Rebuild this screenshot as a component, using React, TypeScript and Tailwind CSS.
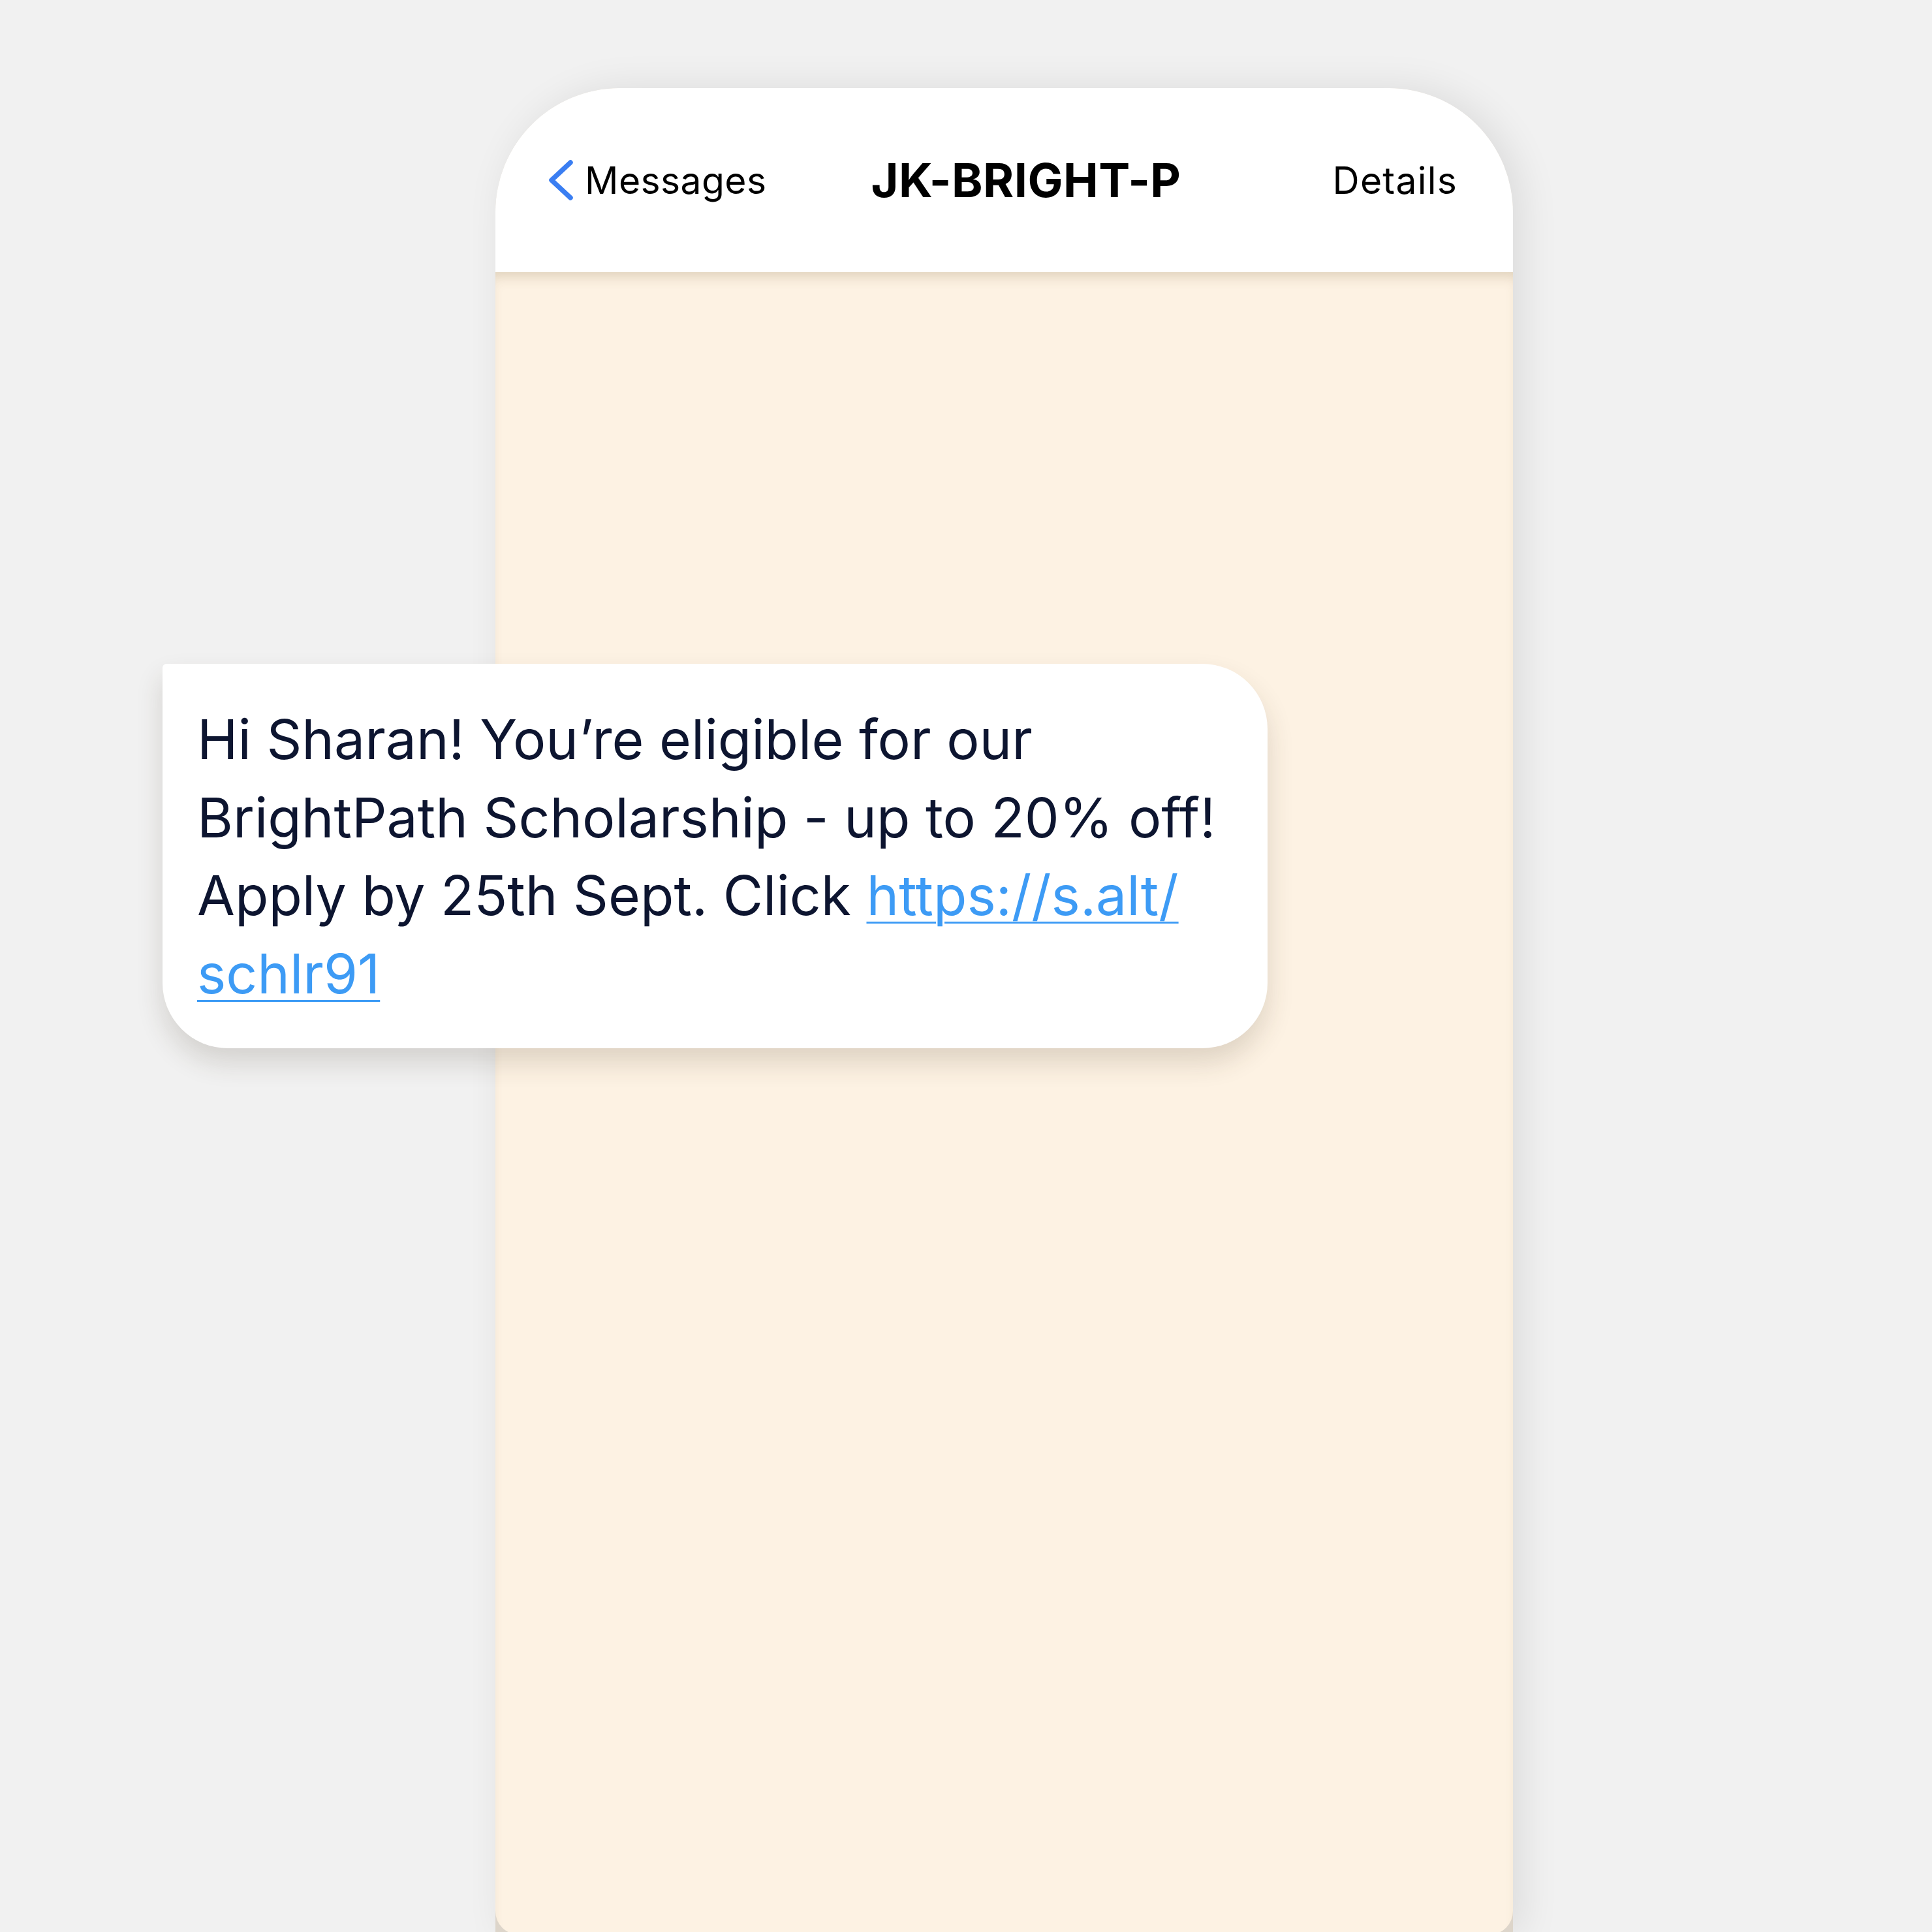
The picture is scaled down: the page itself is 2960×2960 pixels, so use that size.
const font = { fontFamily: "Inter, 'Noto Sans', sans-serif" };

function BackChevron() {
  return (
    <svg width="44" height="70" viewBox="0 0 44 70" fill="none" className="shrink-0">
      <polyline
        points="34,8 5,35 34,62"
        stroke="#3a7ef2"
        strokeWidth="7.5"
        strokeLinecap="round"
        strokeLinejoin="round"
      />
    </svg>
  );
}

function Header() {
  return (
    <div className="flex h-[282px] items-center bg-white pl-[81px] pr-[85px] text-black">
      <div className="flex items-center gap-[12px]">
        <BackChevron />
        <span className="text-[57px] leading-none tracking-[0.4px]">Messages</span>
      </div>
      <span className="ml-[160px] text-[72px] font-bold leading-none tracking-[0.5px]">JK-BRIGHT-P</span>
      <span className="ml-auto text-[57px] leading-none tracking-[1.2px]">Details</span>
    </div>
  );
}

function MessageBubble() {
  return (
    <div className="absolute left-[249px] top-[1017px] w-[1693px] rounded-[100px] rounded-tl-[6px] bg-white pb-[55px] pl-[53px] pr-[40px] pt-[56px] shadow-[0_22px_40px_rgba(60,50,30,0.16)]">
      <p className="whitespace-nowrap text-[84px] leading-[119.5px] text-[#0d1530]">
        Hi Sharan! You’re eligible for our
        <br />
        BrightPath Scholarship - up to 20% off!
        <br />
        Apply by 25th Sept. Click{" "}
        <a className="text-[#3d9bf5] underline decoration-[3px] underline-offset-[10px]">
          https://s.alt/
          <br />
          schlr91
        </a>
      </p>
    </div>
  );
}

export default function App() {
  return (
    <div className="relative h-[2960px] overflow-hidden bg-[#f1f1f1]" style={font}>
      <div className="ml-[759px] mt-[135px] w-[1559px] overflow-hidden rounded-t-[190px] bg-[#ddd5ca] shadow-[14px_0_60px_rgba(0,0,0,0.09)]">
        <Header />
        <div className="h-[2547px] rounded-b-[36px] bg-[#fdf2e3] shadow-[inset_0_16px_20px_-10px_rgba(120,95,50,0.24)]" />
      </div>
      <MessageBubble />
    </div>
  );
}
